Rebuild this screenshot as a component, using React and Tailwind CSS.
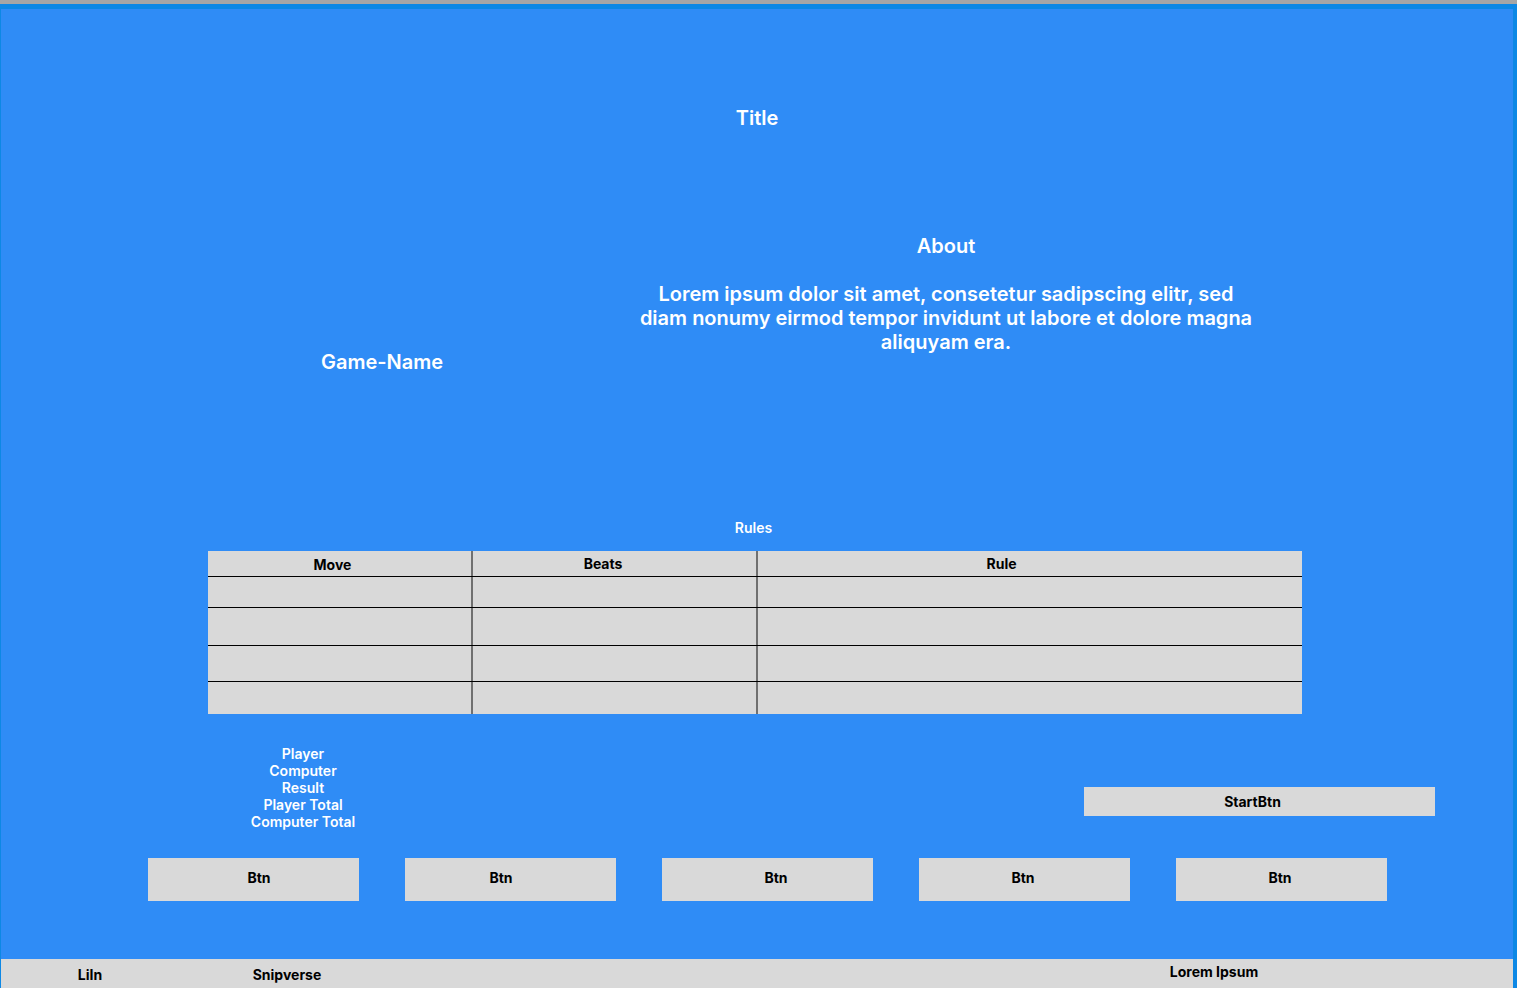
import React from "react";

const rows = [
  { h: "h-[31px]", line: true },
  { h: "h-[38px]", line: true },
  { h: "h-[36px]", line: true },
  { h: "h-[32px]", line: false },
];

const btns = ["pl-[11px]", "pr-[19px]", "pl-[17px]", "pr-[3px]", "pr-[3px]"];

function RulesTable() {
  return (
    <div className="mt-[13px] ml-[207px] w-[1094px] bg-[#d9d9d9] text-black">
      <div className="grid grid-cols-[265px_285px_544px] h-[26px] border-b border-black text-sm font-bold">
        <div className="border-r-2 border-[#707070] flex items-center justify-center pr-[14px] pt-[3px]">Move</div>
        <div className="border-r-2 border-[#707070] flex items-center justify-center pr-[23px]">Beats</div>
        <div className="flex items-center justify-center pr-[57px]">Rule</div>
      </div>
      {rows.map((r, i) => (
        <div
          key={i}
          className={`grid grid-cols-[265px_285px_544px] ${r.h} ${r.line ? "border-b border-black" : ""}`}
        >
          <div className="border-r-2 border-[#707070]" />
          <div className="border-r-2 border-[#707070]" />
          <div />
        </div>
      ))}
    </div>
  );
}

export default function App() {
  return (
    <div className="h-[988px] w-full bg-[#0d88e5] font-['Inter','Liberation_Sans',sans-serif] overflow-hidden">
      <div className="h-[4px] bg-[#a6a6a6]" />
      <div className="pt-[5px] pl-px pr-[4px]">
        <div className="h-[979px] bg-[#2f8cf6] flex flex-col text-white">
          <div className="pt-[95px] text-center text-xl font-semibold leading-7">Title</div>

          <div className="mt-[100px] flex">
            <div className="w-[625px] pl-[320px] pt-[116px] text-xl font-semibold leading-7">Game-Name</div>
            <div className="w-[640px] text-center">
              <div className="text-xl font-semibold leading-7">About</div>
              <p className="mt-[22px] text-xl font-semibold leading-6">
                Lorem ipsum dolor sit amet, consetetur sadipscing elitr, sed
                <br />
                diam nonumy eirmod tempor invidunt ut labore et dolore magna
                <br />
                aliquyam era.
              </p>
            </div>
          </div>

          <div className="mt-[142px] pr-[7px] text-center text-sm font-semibold leading-5">Rules</div>

          <RulesTable />

          <div className="mt-[31px] flex items-start">
            <div className="w-[604px] text-center text-sm font-semibold leading-[17px]">
              <div>Player</div>
              <div>Computer</div>
              <div>Result</div>
              <div>Player Total</div>
              <div>Computer Total</div>
            </div>
            <button className="ml-[479px] mt-[42px] w-[351px] h-[29px] bg-[#d9d9d9] text-black text-sm font-bold pr-[14px]">
              StartBtn
            </button>
          </div>

          <div className="mt-[28px] flex gap-[46px] pl-[147px]">
            {btns.map((p, i) => (
              <button key={i} className={`w-[211px] h-[43px] bg-[#d9d9d9] text-black text-sm font-bold pb-[3px] ${p}`}>
                Btn
              </button>
            ))}
          </div>

          <div className="mt-auto h-[29px] bg-[#d9d9d9] text-black text-sm font-bold flex items-start">
            <span className="w-[178px] text-center pt-[6px] leading-5">LiIn</span>
            <span className="w-[216px] text-center pt-[6px] leading-5">Snipverse</span>
            <span className="ml-[719px] w-[200px] text-center pt-[3px] leading-5">Lorem Ipsum</span>
          </div>
        </div>
      </div>
    </div>
  );
}
